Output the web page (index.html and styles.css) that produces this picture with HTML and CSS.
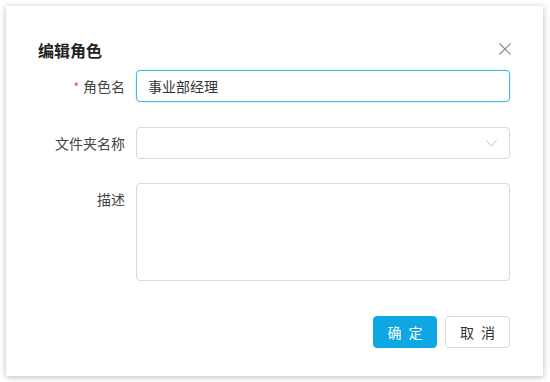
FILE: index.html
```html
<!DOCTYPE html>
<html lang="zh-CN">
<head>
  <meta charset="UTF-8" />
  <meta name="viewport" content="width=device-width, initial-scale=1.0" />
  <title>编辑角色</title>
  <link rel="stylesheet" href="styles.css">
</head>
<body>
  <div class="modal">
    <div class="modal-header">
      <h3 class="modal-title">编辑角色</h3>
      <button class="modal-close" aria-label="关闭">
        <svg width="12" height="12" viewBox="0 0 12 12"><path d="M0.5 0.5 L11.5 11.5 M11.5 0.5 L0.5 11.5" stroke="#8c8c8c" stroke-width="1.2" fill="none"/></svg>
      </button>
    </div>
    <form class="modal-body">
      <div class="form-row">
        <label class="form-label"><span class="required">*</span>角色名</label>
        <div class="form-control">
          <input type="text" class="input input-focus" value="事业部经理" />
        </div>
      </div>
      <div class="form-row">
        <label class="form-label">文件夹名称</label>
        <div class="form-control">
          <div class="select">
            <span class="select-value"></span>
            <svg class="select-arrow" width="11" height="7" viewBox="0 0 11 7"><path d="M0.5 0.5 L5.5 6 L10.5 0.5" stroke="#bfbfbf" stroke-width="1" fill="none"/></svg>
          </div>
        </div>
      </div>
      <div class="form-row">
        <label class="form-label">描述</label>
        <div class="form-control">
          <textarea class="textarea"></textarea>
        </div>
      </div>
    </form>
    <div class="modal-footer">
      <button class="btn btn-primary">确 定</button>
      <button class="btn">取 消</button>
    </div>
  </div>
</body>
</html>
```

FILE: styles.css
```css
* {
  margin: 0;
  padding: 0;
  box-sizing: border-box;
  font-family: 'Noto Sans CJK SC', 'Liberation Sans', sans-serif;
}
body {
  background: #fff;
  color: #333;
  font-size: 14px;
}
.modal {
  margin: 6px;
  width: 537px;
  height: 370px;
  background: #fff;
  box-shadow: 0 1px 6px rgba(0,0,0,0.28);
  padding: 32px 33px 28px 32px;
  display: flex;
  flex-direction: column;
}
.modal-header {
  display: flex;
  justify-content: space-between;
  align-items: center;
  height: 24px;
}
.modal-title {
  font-size: 16px;
  font-weight: 700;
  color: #222;
  line-height: 24px;
}
.modal-close {
  border: none;
  background: none;
  cursor: pointer;
  display: flex;
  margin-top: -2px;
  margin-right: -1px;
}
.modal-body {
  margin-top: 8px;
  display: flex;
  flex-direction: column;
  gap: 24px;
}
.form-row {
  display: flex;
  align-items: flex-start;
}
.form-label {
  width: 87px;
  text-align: right;
  line-height: 32px;
  color: #444;
  font-size: 14px;
  margin-right: 11px;
}
.required {
  color: #f04134;
  margin-right: 4px;
  font-size: 12px;
}
.form-control {
  flex: 1;
}
.input, .select, .textarea {
  width: 100%;
  border: 1px solid #d9d9d9;
  border-radius: 4px;
  background: #fff;
  font-size: 14px;
  color: #333;
}
.input {
  height: 32px;
  padding: 0 11px;
  outline: none;
}
.input-focus {
  border-color: #3db8e3;
  box-shadow: 0 0 0 1px rgba(61,184,227,0.12);
}
.select {
  height: 32px;
  display: flex;
  align-items: center;
  justify-content: space-between;
  padding: 0 12px 0 11px;
}
.select-arrow {
  margin-top: 1px;
}
.textarea {
  height: 98px;
  resize: none;
  padding: 4px 11px;
  display: block;
  outline: none;
}
.modal-footer {
  margin-top: auto;
  display: flex;
  justify-content: flex-end;
  gap: 8px;
}
.btn {
  height: 32px;
  width: 65px;
  border: 1px solid #d9d9d9;
  border-radius: 4px;
  background: #fff;
  color: #333;
  font-size: 14px;
  letter-spacing: 2px;
  text-indent: 2px;
  cursor: pointer;
}
.btn-primary {
  width: 64px;
  background: #0fa6e4;
  border-color: #0fa6e4;
  color: #fff;
}
```
